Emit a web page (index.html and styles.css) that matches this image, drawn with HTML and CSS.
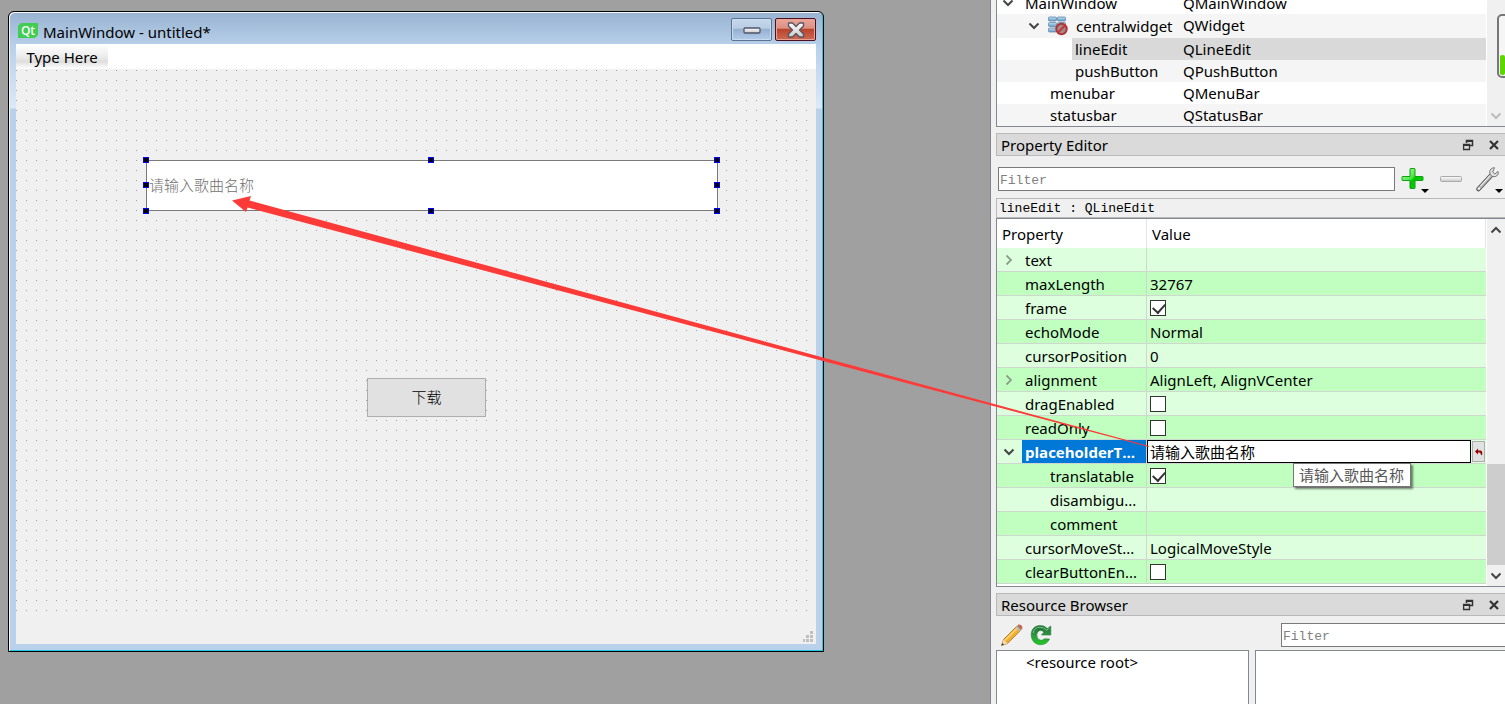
FILE: index.html
```html
<!DOCTYPE html>
<html lang="en">
<head>
<meta charset="utf-8">
<title>Qt Designer</title>
<link rel="stylesheet" href="styles.css">
</head>
<body>
<svg class="defs" width="0" height="0">
  <defs>
    <linearGradient id="gPlus" x1="0" y1="0" x2="1" y2="1"><stop offset="0" stop-color="#b8ffb0"/><stop offset=".45" stop-color="#4be84b"/><stop offset=".55" stop-color="#00c400"/><stop offset="1" stop-color="#12dc12"/></linearGradient>
    <linearGradient id="gGrey" x1="0" y1="0" x2="0" y2="1"><stop offset="0" stop-color="#fff"/><stop offset="1" stop-color="#c8c8c8"/></linearGradient>
    <linearGradient id="gCell" x1="0" y1="0" x2="0" y2="1"><stop offset="0" stop-color="#b5def8"/><stop offset="1" stop-color="#6f9cc4"/></linearGradient>
    <linearGradient id="gReload" x1="0" y1="0" x2="0" y2="1"><stop offset="0" stop-color="#1f6b33"/><stop offset=".5" stop-color="#2f9444"/><stop offset="1" stop-color="#1fce1f"/></linearGradient>
    <symbol id="down" viewBox="0 0 12 8"><path d="M1.5 1.5 6 6l4.5-4.5" fill="none" stroke="currentColor" stroke-width="2"/></symbol>
    <symbol id="up" viewBox="0 0 12 8"><path d="M1.5 6.5 6 2l4.5 4.5" fill="none" stroke="currentColor" stroke-width="2"/></symbol>
    <symbol id="right" viewBox="0 0 8 12"><path d="M1.5 1.5 6 6l-4.500 4.500" fill="none" stroke="currentColor" stroke-width="1.800"/></symbol>
    <symbol id="float" viewBox="0 0 12 12"><path d="M4.500 4V1.500h6v5H8" fill="none" stroke="#333" stroke-width="1.500"/><path d="M4 1h7v2H4zM1 5h7v2H1z" fill="#333"/><path d="M1.600 5.500h5.900v5H1.600z" fill="none" stroke="#333" stroke-width="1.300"/></symbol>
    <symbol id="close" viewBox="0 0 12 12"><path d="m2 2 8 8M10 2l-8 8" fill="none" stroke="#333" stroke-width="2.200"/></symbol>
  </defs>
</svg>

<main class="designer">
  <section class="workspace" aria-label="Form workspace">
    <article class="window">
      <header class="titlebar">
        <svg class="qt" viewBox="0 0 20 15"><path d="M3 0h17v12l-3 3H0V3z" fill="#41cd52"/><text x="10" y="12" text-anchor="middle" class="qt-text">Qt</text></svg>
        <h1 class="window-title">MainWindow - untitled*</h1>
        <button class="win-button minimize" aria-label="Minimize"><svg width="18" height="8" viewBox="0 0 18 8"><rect x="1" y="1" width="16" height="5" rx="1" fill="url(#gGrey)" stroke="#50566a" stroke-width="1.300"/></svg></button>
        <button class="win-button shut" aria-label="Close window"><svg width="20" height="18" viewBox="0 0 20 18"><path d="M2.500 2h4L10 5.500 13.500 2h4v3L13.500 9l4 4v3h-4L10 12.500 6.500 16h-4v-3l4-4-4-4z" fill="url(#gGrey)" stroke="#565464" stroke-width="1.300" stroke-linejoin="round"/></svg></button>
      </header>
      <nav class="menubar"><button class="type-here">Type Here</button></nav>
      <div class="form">
        <input class="line-edit" type="text" placeholder="请输入歌曲名称" aria-label="lineEdit">
        <i class="handle h-left v-top"></i><i class="handle h-mid v-top"></i><i class="handle h-right v-top"></i>
        <i class="handle h-left v-mid"></i><i class="handle h-right v-mid"></i>
        <i class="handle h-left v-bottom"></i><i class="handle h-mid v-bottom"></i><i class="handle h-right v-bottom"></i>
        <button class="push-button">下载</button>
      </div>
      <footer class="statusbar"><svg width="10" height="11" viewBox="0 0 10 11" fill="#bfbfbf"><path d="M7 0h3v3H7zM3 4h3v3H3zM7 4h3v3H7zM0 8h2v3H0zM3 8h3v3H3zM7 8h3v3H7z"/></svg></footer>
    </article>
  </section>

  <aside class="dock">
    <section class="inspector" aria-label="Object Inspector">
      <div class="tree" role="tree">
        <div class="tree-row" role="treeitem"><span class="tree-name depth-0"><svg class="chev"><use href="#down"/></svg>MainWindow</span><span>QMainWindow</span></div>
        <div class="tree-row tall" role="treeitem"><span class="tree-name depth-1"><svg class="chev"><use href="#down"/></svg><svg class="layout-icon" viewBox="0 0 20 20"><g fill="url(#gCell)" stroke="#587f9f" stroke-width=".7"><rect x=".5" y="1" width="8" height="4" rx="1"/><rect x="9.500" y="1" width="8" height="4" rx="1"/><rect x=".5" y="6.500" width="8" height="4" rx="1"/><rect x="9.500" y="6.500" width="8" height="4" rx="1"/><rect x=".5" y="12" width="8" height="4" rx="1"/></g><circle cx="13.500" cy="13" r="5.200" fill="#a08c8c" stroke="#b33232" stroke-width="2"/><path d="m10 16.500 7-7" stroke="#c23a3a" stroke-width="2.200"/></svg>centralwidget</span><span>QWidget</span></div>
        <div class="tree-row" role="treeitem" aria-selected="true"><span class="tree-name depth-3">lineEdit</span><span>QLineEdit</span></div>
        <div class="tree-row" role="treeitem"><span class="tree-name depth-3">pushButton</span><span>QPushButton</span></div>
        <div class="tree-row" role="treeitem"><span class="tree-name depth-2">menubar</span><span>QMenuBar</span></div>
        <div class="tree-row" role="treeitem"><span class="tree-name depth-2">statusbar</span><span>QStatusBar</span></div>
      </div>
      <div class="scrollbar faded"><button class="scroll-step" aria-label="Scroll down"><svg class="chev"><use href="#down"/></svg></button></div>
      <div class="gauge"><i class="gauge-level"></i></div>
    </section>

    <header class="dock-title"><h2>Property Editor</h2><button class="icon-button" aria-label="Float"><svg width="12" height="12"><use href="#float"/></svg></button><button class="icon-button" aria-label="Close"><svg width="12" height="12"><use href="#close"/></svg></button></header>
    <div class="property-tools">
      <input class="filter" type="text" placeholder="Filter" aria-label="Filter properties">
      <button class="icon-button" aria-label="Add property"><svg width="28" height="28" viewBox="0 0 28 28"><path d="M9.500 3.500h4q.5 0 .5.5v7.500h7.500q.5 0 .5.500v3q0 .5-.5.500H14V23q0 .5-.5.500h-4Q9 23.500 9 23v-7.500H1.500Q1 15.500 1 15v-3q0-.5.5-.5H9V4q0-.5.500-.5z" fill="url(#gPlus)" stroke="#10a010"/><path d="M20 24h8l-4 4z"/></svg></button>
      <button class="icon-button" aria-label="Remove property"><svg width="24" height="8" viewBox="0 0 24 8"><rect x="1.500" y="1.500" width="21" height="5" rx="1" fill="url(#gGrey)" stroke="#aaa"/></svg></button>
      <button class="icon-button wrench" aria-label="Configure property editor"><svg width="28" height="28" viewBox="0 0 28 28"><path d="M3.500 24 17 9.500" stroke="#555" stroke-width="4.600" stroke-linecap="round"/><path d="M3.500 24 17 9.500" stroke="#bbb" stroke-width="2.600" stroke-linecap="round"/><path d="m5.500 21 11-12" stroke="#fff" stroke-width="1"/><path d="M19.500 2.700Q15 3 14.700 7q-.2 3.500 3 4.500 3 .8 5-1.500 1-1.500.4-3.500l-3.300 2.500-2.100-2z" fill="#e2e2e2" stroke="#777"/><path d="M4 23.500h.1" stroke="#fff" stroke-width="2" stroke-linecap="round"/><path d="M20 24h8l-4 4z"/></svg></button>
    </div>
    <div class="object-name">lineEdit : QLineEdit</div>

    <section class="properties">
      <table class="property-table">
        <colgroup><col class="col-name"><col></colgroup>
        <thead><tr><th>Property</th><th>Value</th></tr></thead>
        <tbody>
          <tr><td><svg class="side"><use href="#right"/></svg>text</td><td></td></tr>
          <tr><td>maxLength</td><td>32767</td></tr>
          <tr><td><label for="frame">frame</label></td><td><input id="frame" type="checkbox" checked></td></tr>
          <tr><td>echoMode</td><td>Normal</td></tr>
          <tr><td>cursorPosition</td><td>0</td></tr>
          <tr><td><svg class="side"><use href="#right"/></svg>alignment</td><td>AlignLeft, AlignVCenter</td></tr>
          <tr><td><label for="drag">dragEnabled</label></td><td><input id="drag" type="checkbox"></td></tr>
          <tr><td><label for="readonly">readOnly</label></td><td><input id="readonly" type="checkbox"></td></tr>
          <tr class="current"><td><div class="current-name"><svg class="chev"><use href="#down"/></svg><label for="placeholder">placeholderT...</label></div></td><td><div class="editor"><input id="placeholder" type="text" value="请输入歌曲名称"><button class="reset" aria-label="Reset"><svg width="8" height="8" viewBox="0 0 8 8"><path d="M0 3.500 3 .5v2h2.500Q8 3 7 7.500L5.500 6Q6 4.500 4.500 4.500H3v2z" fill="#960000"/></svg></button></div></td></tr>
          <tr class="sub"><td><label for="translatable">translatable</label></td><td><input id="translatable" type="checkbox" checked></td></tr>
          <tr class="sub"><td>disambigu...</td><td></td></tr>
          <tr class="sub"><td>comment</td><td></td></tr>
          <tr><td>cursorMoveSt...</td><td>LogicalMoveStyle</td></tr>
          <tr><td><label for="clear">clearButtonEn...</label></td><td><input id="clear" type="checkbox"></td></tr>
        </tbody>
      </table>
      <div class="scrollbar"><button class="scroll-step" aria-label="Scroll up"><svg class="chev"><use href="#up"/></svg></button><i class="track"></i><i class="thumb"></i><button class="scroll-step" aria-label="Scroll down"><svg class="chev"><use href="#down"/></svg></button></div>
      <div class="tooltip" role="tooltip">请输入歌曲名称</div>
    </section>

    <header class="dock-title"><h2>Resource Browser</h2><button class="icon-button" aria-label="Float"><svg width="12" height="12"><use href="#float"/></svg></button><button class="icon-button" aria-label="Close"><svg width="12" height="12"><use href="#close"/></svg></button></header>
    <div class="resource-tools">
      <button class="icon-button" aria-label="Edit resources"><svg width="24" height="24" viewBox="0 0 24 24"><path d="m1.500 22.500 2-6L17 3l4 4L7.500 20.500z" fill="#f0ad2e" stroke="#a87420" stroke-width=".8"/><path d="m5 17.500 13-13" stroke="#ffdc80" stroke-width="1.500"/><path d="m1.500 22.500 2-6 4 4z" fill="#efdcb4"/><path d="m1.500 22.500.8-2.500 1.700 1.700z" fill="#333"/><path d="m17 3 4 4 1.200-1.200Q23 4 21.500 2.500T18.500 1.500z" fill="#c4694f"/><path d="m15.500 4.500 4 4L21 7l-4-4z" fill="#b6bdc0"/></svg></button>
      <button class="icon-button" aria-label="Reload"><svg width="22" height="22" viewBox="0 0 22 22"><path d="M17.300 4.500Q14 1 9.500 1.600C4 2 1 6 1.200 11.200 1.500 17 5.500 20.600 10.500 20.700 15 20.700 18 18.500 19.500 15l-5-.2q-2 2-4.300 1.300Q6.500 15 6.800 10.700 7.500 6.500 11 6.500q1.700.2 2.800 1.700L11.500 11h9.300V2z" fill="url(#gReload)" stroke="#218538" stroke-width=".6"/><path d="M3 9Q4.500 3 10 3.200q4 0 6.500 3L19.500 4" fill="none" stroke="#83c98e" stroke-width="1"/></svg></button>
      <input class="filter" type="text" placeholder="Filter" aria-label="Filter resources">
    </div>
    <div class="resource-panes"><div class="resource-tree">&lt;resource root&gt;</div><div class="resource-files"></div></div>
  </aside>
</main>
<svg class="annotation" width="1160" height="460" viewBox="0 0 1160 460" aria-hidden="true"><path d="M232 200.500 251 196l-1.500 4.500L823 357.500 1149 446v1L823 361 247.500 207.500 246 212z" fill="#fc3a38"/></svg>
</body>
</html>
```
FILE: styles.css
```css
* { box-sizing: border-box; }

body {
  position: relative;
  margin: 0;
  overflow: hidden;
  color: #000;
  font: 15px/22px "Noto Sans", "Noto Sans CJK SC", sans-serif;
}

button, input { font: inherit; color: inherit; }
button { padding: 0; border: 0; background: none; }
h1, h2 { margin: 0; font-size: inherit; font-weight: 400; }
.defs { position: absolute; }

.designer {
  display: grid;
  grid-template-columns: minmax(0, 1fr) 515px;
  height: 100vh;
}

.workspace { position: relative; background: #a0a0a0; }

.annotation {
  position: absolute;
  top: 0;
  left: 0;
  pointer-events: none;
}

/* Form window */
.window {
  position: absolute;
  top: 11px;
  left: 8px;
  display: flex;
  flex-direction: column;
  width: 816px;
  height: 641px;
  padding: 0 7px 7px;
  border: 1px solid #000;
  border-radius: 6px 6px 0 0;
  background:
    linear-gradient(#98b2d0, #b8d0ea 34px, #dce9f7 96px, #b9d1ea 97px);
  box-shadow: inset 1px 1px #f4f9ff, inset -1px -1px #22c8e8;
}

.titlebar {
  display: flex;
  flex: none;
  align-items: center;
  gap: 3px;
  height: 32px;
  padding: 4px 0 0 2px;
}
.qt { width: 20px; height: 15px; }
.qt-text { font: 600 12px "Open Sans", sans-serif; fill: #fff; }
.window-title { flex: 1; padding: 4px 0 0 2px; }

.win-button {
  display: grid;
  place-items: center;
  width: 41px;
  height: 23px;
  margin-bottom: 1px;
  border: 1px solid #5d7190;
  border-radius: 2px;
  background: linear-gradient(#c6d7ea, #b8cde4 45%, #94afcd 46%, #b2cdea);
  box-shadow: inset 0 0 0 1px #c9dcf0;
}
.win-button.minimize svg { margin-top: 3px; }
.win-button.shut {
  border-color: #4c1020;
  background: linear-gradient(#eaa79a, #dc8e80 45%, #b8402a 46%, #cf6a52);
  box-shadow: inset 0 0 0 1px #e6a396;
}

.menubar { display: flex; flex: none; height: 25px; background: #fff; }
.type-here {
  width: 92px;
  background: linear-gradient(#fff, #ececec 50%, #dedede 70%, #fff);
}

.form {
  position: relative;
  flex: 1;
  background-color: #f0f0f0;
  background-image: conic-gradient(from 0deg at 1px 1px, transparent 75%, #a0a0a0 0);
  background-size: 10px 10px;
  background-position: 0 1px;
}
.line-edit {
  position: absolute;
  top: 91px;
  left: 130px;
  width: 572px;
  height: 51px;
  padding: 0 2px 2px;
  border: 1px solid #7a7a7a;
  border-radius: 0;
  background: #fff;
}
.line-edit::placeholder { color: #707070; font-weight: 300; opacity: 1; }

.handle {
  position: absolute;
  width: 6px;
  height: 6px;
  border: 1px solid #00f;
  background: #000;
}
.h-left { left: 127px; }
.h-mid { left: 412px; }
.h-right { left: 698px; }
.v-top { top: 88px; }
.v-mid { top: 113px; }
.v-bottom { top: 139px; }

.push-button {
  position: absolute;
  top: 309px;
  left: 351px;
  width: 119px;
  height: 39px;
  padding-bottom: 2px;
  border: 1px solid #adadad;
  background: #e1e1e1;
  font-weight: 300;
}
.statusbar {
  display: flex;
  flex: none;
  justify-content: flex-end;
  align-items: flex-end;
  height: 32px;
  padding: 2px 3px;
  background: #f0f0f0;
}

/* Dock column */
.dock {
  display: flex;
  flex-direction: column;
  min-width: 0;
  padding-left: 5px;
  border-left: 1px solid #85838e;
  background: #f0f0f0;
}
.chev { flex: none; width: 12px; height: 8px; color: #444; }

.inspector {
  position: relative;
  display: flex;
  overflow: hidden;
  border: 1px solid #828790;
  border-width: 0 0 1px 1px;
  background: #fff;
}
.tree { flex: 1; margin-top: -8px; padding-right: 1px; }
.tree-row {
  display: grid;
  grid-template-columns: 186px 1fr;
  height: 22px;
  padding-bottom: 1px;
  white-space: nowrap;
}
.tree-row.tall { height: 24px; }
.tree-row:nth-child(even) { background: #f5f5f5; }
.tree-row[aria-selected] {
  background: linear-gradient(#d9d9d9, #d9d9d9) right / calc(100% - 75px) no-repeat;
}
.tree-name { display: flex; align-items: center; }
.depth-0 { gap: 11px; padding-left: 5px; }
.depth-1 { gap: 8px; padding-left: 31px; }
.depth-2 { padding-left: 53px; }
.depth-3 { padding-left: 78px; }
.layout-icon { flex: none; width: 20px; height: 20px; }

.scrollbar {
  display: flex;
  flex-direction: column;
  flex: none;
  width: 18px;
  background: #f0f0f0;
}
.scrollbar.faded { justify-content: flex-end; }
.scrollbar.faded .chev { color: #bcbcbc; }
.scroll-step { height: 21px; line-height: 0; }
.track { flex: 225; }
.thumb { flex: 101; background: #cdcdcd; }

.gauge {
  position: absolute;
  top: 14px;
  right: -5px;
  display: flex;
  align-items: flex-end;
  width: 13px;
  height: 64px;
  padding: 1px;
  border: 2px solid #777;
  border-radius: 5px;
  background: #f5f5f5;
}
.gauge-level { width: 5px; height: 20px; border-radius: 2px; background: #5cd600; }

.dock-title {
  display: flex;
  flex: none;
  align-items: center;
  gap: 14px;
  height: 23px;
  margin-top: 6px;
  padding: 0 5px 0 4px;
  border: 1px solid #b9b9b9;
  border-right: 0;
  background: #dadada;
}
.dock-title h2 { flex: 1; }
.icon-button { line-height: 0; }

.property-tools {
  display: flex;
  align-items: center;
  gap: 10px;
  height: 42px;
  padding: 4px 2px 0 2px;
}
.property-tools .filter { flex: 1; margin-right: -4px; }
.property-tools .wrench { margin-left: 2px; }
.filter {
  min-width: 0;
  height: 24px;
  padding: 2px 1px 0;
  border: 1px solid #7a7a7a;
  border-radius: 0;
  background: #fff;
  font: 13px "Liberation Mono", monospace;
}
.filter::placeholder { color: #808080; opacity: 1; }

.object-name {
  flex: none;
  height: 20px;
  padding-left: 2px;
  border: 1px solid #b9b9b9;
  border-right: 0;
  font: 13px/19px "Liberation Mono", monospace;
}

.properties {
  position: relative;
  display: flex;
  height: 369px;
  border: 1px solid #828790;
  border-right: 0;
  background: #fff;
}
.property-table {
  flex: 1;
  align-self: flex-start;
  margin-right: 1px;
  border-spacing: 0;
  table-layout: fixed;
}
.col-name { width: 150px; }
th {
  height: 29px;
  padding: 0 5px;
  border-right: 1px solid #e5e5e5;
  font-weight: 400;
  text-align: left;
}
td {
  position: relative;
  height: 24px;
  padding: 0 0 0 3px;
  border-bottom: 1px solid #cfd8cf;
  line-height: 22px;
  white-space: nowrap;
}
td:first-child { padding-left: 28px; border-right: 1px solid #cfd8cf; }
tbody tr:nth-child(odd) { background: #ddffdd; }
tbody tr:nth-child(even) { background: #c0ffc0; }
.sub td:first-child { padding-left: 53px; }
.side { position: absolute; top: 6px; left: 8px; width: 8px; height: 12px; color: #8aa08a; }

td input[type="checkbox"] {
  display: block;
  width: 16px;
  height: 16px;
  margin: 0;
  border: 1px solid #333;
  appearance: none;
  background: #fff;
}
td input[type="checkbox"]:checked::after {
  content: "";
  display: block;
  width: 6px;
  height: 10px;
  margin: 0 0 0 4px;
  border: solid #333;
  border-width: 0 2px 2px 0;
  transform: rotate(42deg);
}
.current td, .current td:first-child { padding: 0; }
.current-name {
  display: flex;
  align-items: center;
  gap: 10px;
  height: 23px;
  padding-left: 6px;
  overflow: hidden;
  background: linear-gradient(#0078d7, #0078d7) right / calc(100% - 25px) no-repeat;
  color: #fff;
  font-family: "Open Sans", sans-serif;
  font-weight: 700;
}
.editor { display: flex; gap: 1px; height: 23px; padding-right: 1px; }
.editor input {
  flex: 1;
  min-width: 0;
  height: 23px;
  padding: 0 2px;
  border: 1px solid #000;
  border-radius: 0;
  background: #fff;
}
.reset {
  width: 13px;
  height: 21px;
  margin-top: 1px;
  border: 1px solid #adadad;
  background: #e1e1e1;
  line-height: 0;
}
.tooltip {
  position: absolute;
  top: 244px;
  right: 94px;
  height: 24px;
  padding: 0 6px 0 5px;
  border: 1px solid #767676;
  background: #fff;
  box-shadow: 2px 2px 2px rgba(0, 0, 0, .5);
  color: #575757;
}

.resource-tools { display: flex; flex: none; align-items: center; height: 34px; padding: 4px 0 0 4px; gap: 6px; }
.resource-tools .filter { width: 225px; margin-left: auto; margin-right: -1px; }
.resource-panes { display: grid; grid-template-columns: 253px 1fr; gap: 6px; flex: 1; }
.resource-tree, .resource-files { border: 1px solid #828790; border-bottom: 0; background: #fff; }
.resource-tree { padding-left: 29px; }
.resource-files { border-right: 0; }
```
